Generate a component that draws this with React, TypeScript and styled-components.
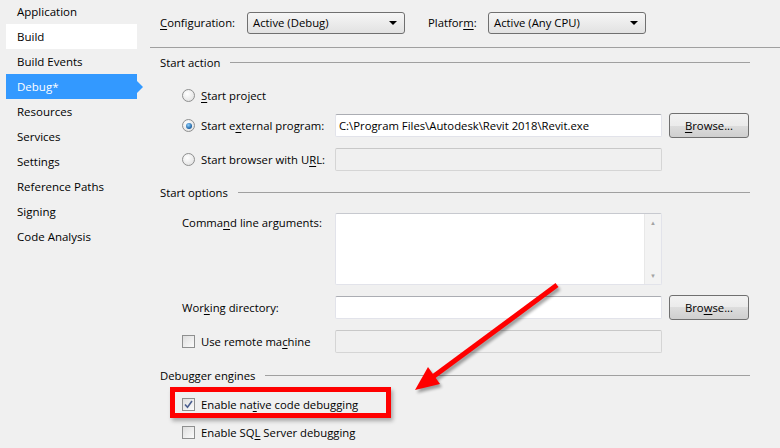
import styled, { createGlobalStyle } from 'styled-components';

const GlobalStyle = createGlobalStyle`
  html, body {
    margin: 0;
    padding: 0;
    background: #f0f0f0;
  }
  body {
    font-family: 'Open Sans', 'Noto Sans', sans-serif;
    font-size: 11px;
    color: #000;
  }
`;

const navItems = [
  'Application',
  'Build',
  'Build Events',
  'Debug*',
  'Resources',
  'Services',
  'Settings',
  'Reference Paths',
  'Signing',
  'Code Analysis',
];

// a label with the accelerator letter underlined
const Acc = ({ text, at }: { text: string; at: number }) => (
  <>
    {text.slice(0, at)}
    <U>{text[at]}</U>
    {text.slice(at + 1)}
  </>
);

const Radio = ({ checked }: { checked?: boolean }) => (
  <RadioOuter>{checked && <RadioDot />}</RadioOuter>
);

const Check = ({ checked }: { checked?: boolean }) => (
  <CheckBox>
    {checked && (
      <svg width="9" height="9" viewBox="0 0 9 9">
        <path d="M1 4.5 L3.5 7.2 L8 1" fill="none" stroke="#4b5f8f" strokeWidth="1.6" />
      </svg>
    )}
  </CheckBox>
);

const Arrow = () => (
  <ArrowLayer width="780" height="448" viewBox="0 0 780 448">
    <defs>
      <filter id="sh" x="-20%" y="-20%" width="140%" height="140%">
        <feGaussianBlur stdDeviation="1.5" />
      </filter>
    </defs>
    <g transform="translate(2 3)" opacity="0.35" filter="url(#sh)">
      <line x1="557" y1="285" x2="430" y2="379" stroke="#000" strokeWidth="5" />
      <polygon points="415,390 440,384 428,367" fill="#000" />
    </g>
    <line x1="557" y1="285" x2="430" y2="379" stroke="#ff0000" strokeWidth="5" />
    <polygon points="415,390 440,384 428,367" fill="#ff0000" />
  </ArrowLayer>
);

const App = () => {
  return (
    <Page>
      <GlobalStyle />
      <Sidebar>
        <NavList>
          {navItems.map((item) => (
            <NavItem key={item} $state={item === 'Debug*' ? 'active' : item === 'Build' ? 'hover' : 'none'}>
              {item}
            </NavItem>
          ))}
        </NavList>
      </Sidebar>

      <Main>
        <Header>
          <HeaderLabel $w={87}>
            <Acc text="Configuration:" at={0} />
          </HeaderLabel>
          <Dropdown>
            Active (Debug)
            <Caret />
          </Dropdown>
          <HeaderLabel $w={60} $gap={23}>
            <Acc text="Platform:" at={7} />
          </HeaderLabel>
          <Dropdown>
            Active (Any CPU)
            <Caret />
          </Dropdown>
        </Header>

        <GroupTitle $top={7}>Start action</GroupTitle>
        <Row $top={15}>
          <Radio />
          <ControlLabel>
            <Acc text="Start project" at={0} />
          </ControlLabel>
        </Row>
        <Row $top={7}>
          <Radio checked />
          <ControlLabel>
            <Acc text="Start external program:" at={7} />
          </ControlLabel>
          <TextBox>C:\Program Files\Autodesk\Revit 2018\Revit.exe</TextBox>
          <Button>
            <Acc text="Browse..." at={0} />
          </Button>
        </Row>
        <Row $top={11}>
          <Radio />
          <ControlLabel>
            <Acc text="Start browser with URL:" at={20} />
          </ControlLabel>
          <TextBox $disabled />
        </Row>

        <GroupTitle $top={14}>Start options</GroupTitle>
        <Row $top={14} $h={72} $align="flex-start">
          <PlainLabel $pad={2}>
            <Acc text="Command line arguments:" at={5} />
          </PlainLabel>
          <TextArea>
            <ScrollBar>
              <span>▲</span>
              <span>▼</span>
            </ScrollBar>
          </TextArea>
        </Row>
        <Row $top={10} $h={25}>
          <PlainLabel>
            <Acc text="Working directory:" at={3} />
          </PlainLabel>
          <TextBox />
          <Button>
            <Acc text="Browse..." at={3} />
          </Button>
        </Row>
        <Row $top={10}>
          <Check />
          <ControlLabel>
            <Acc text="Use remote machine" at={13} />
          </ControlLabel>
          <TextBox $disabled />
        </Row>

        <GroupTitle $top={15}>Debugger engines</GroupTitle>
        <Highlight>
          <Check checked />
          <CheckText>
            <Acc text="Enable native code debugging" at={9} />
          </CheckText>
        </Highlight>
        <Row $top={3}>
          <Check />
          <CheckText>
            <Acc text="Enable SQL Server debugging" at={9} />
          </CheckText>
        </Row>
      </Main>
      <Arrow />
    </Page>
  );
};

export default App;

const Page = styled.div`
  position: relative;
  width: 780px;
  height: 448px;
  overflow: hidden;
  display: flex;
  background: #f0f0f0;
`;

const Sidebar = styled.div`
  width: 150px;
  flex-shrink: 0;
`;

const NavList = styled.div`
  margin-top: -1px;
  padding-left: 6px;
  display: flex;
  flex-direction: column;
`;

const NavItem = styled.div<{ $state: 'active' | 'hover' | 'none' }>`
  position: relative;
  width: 131px;
  height: 25px;
  line-height: 25px;
  padding-left: 11px;
  box-sizing: border-box;
  font-size: 11.5px;
  color: ${({ $state }) => ($state === 'active' ? '#fff' : '#000')};
  background: ${({ $state }) => ($state === 'active' ? '#3399ff' : $state === 'hover' ? '#fff' : 'transparent')};

  ${({ $state }) =>
    $state === 'active' &&
    `
    &::after {
      content: '';
      position: absolute;
      left: 100%;
      top: 7px;
      border-left: 6px solid #3399ff;
      border-top: 6px solid transparent;
      border-bottom: 6px solid transparent;
    }
  `}
`;

const Main = styled.div`
  flex: 1;
  display: flex;
  flex-direction: column;
  font-size: 11.3px;
`;

const Header = styled.div`
  display: flex;
  align-items: center;
  height: 48px;
  padding: 12px 0 14px 10px;
  box-sizing: border-box;
  border-bottom: 1px solid #a0a0a0;
`;

const HeaderLabel = styled.div<{ $w: number; $gap?: number }>`
  width: ${({ $w }) => $w}px;
  margin-left: ${({ $gap }) => $gap ?? 0}px;
`;

const Dropdown = styled.div`
  position: relative;
  width: 158px;
  height: 22px;
  box-sizing: border-box;
  padding-left: 5px;
  line-height: 20px;
  border: 1px solid #707070;
  border-radius: 3px;
  background: linear-gradient(#f6f6f6, #e2e2e2);
`;

const Caret = styled.span`
  position: absolute;
  right: 7px;
  top: 8px;
  border-top: 4px solid #000;
  border-left: 4px solid transparent;
  border-right: 4px solid transparent;
`;

const GroupTitle = styled.div<{ $top: number }>`
  display: flex;
  align-items: center;
  gap: 10px;
  height: 14px;
  margin: ${({ $top }) => $top}px 30px 0 10px;

  &::after {
    content: '';
    flex: 1;
    height: 1px;
    background: #a0a0a0;
  }
`;

const Row = styled.div<{ $top: number; $h?: number; $align?: string }>`
  display: flex;
  align-items: ${({ $align }) => $align ?? 'center'};
  height: ${({ $h }) => $h ?? 23}px;
  margin-top: ${({ $top }) => $top}px;
  padding-left: 32px;
`;

const U = styled.span`
  text-decoration: underline;
  text-underline-offset: 2px;
`;

const RadioOuter = styled.div`
  width: 13px;
  height: 13px;
  box-sizing: border-box;
  border-radius: 50%;
  border: 1px solid #8e8f8f;
  background: radial-gradient(circle at 40% 35%, #ffffff, #dcdcdc);
  display: flex;
  align-items: center;
  justify-content: center;
  flex-shrink: 0;
`;

const RadioDot = styled.div`
  width: 6px;
  height: 6px;
  border-radius: 50%;
  background: radial-gradient(circle at 40% 35%, #8fd0ff, #1a5e9e 70%);
`;

const CheckBox = styled.div`
  width: 13px;
  height: 13px;
  box-sizing: border-box;
  border: 1px solid #8e8f8f;
  background: linear-gradient(135deg, #dedede, #fbfbfb);
  display: flex;
  align-items: center;
  justify-content: center;
  flex-shrink: 0;
`;

const ControlLabel = styled.div`
  width: 134px;
  margin-left: 6px;
  white-space: nowrap;
`;

const CheckText = styled.div`
  margin-left: 6px;
  white-space: nowrap;
`;

const PlainLabel = styled.div<{ $pad?: number }>`
  width: 153px;
  padding-top: ${({ $pad }) => $pad ?? 0}px;
  white-space: nowrap;
`;

const TextBox = styled.div<{ $disabled?: boolean }>`
  width: 327px;
  height: 23px;
  box-sizing: border-box;
  padding-left: 3px;
  line-height: 21px;
  border: 1px solid ${({ $disabled }) => ($disabled ? '#d5d5d5' : '#e2e3ea')};
  border-top-color: ${({ $disabled }) => ($disabled ? '#c8c8c8' : '#abadb3')};
  border-radius: 2px;
  background: ${({ $disabled }) => ($disabled ? '#f0f0f0' : '#fff')};
  white-space: nowrap;
  overflow: hidden;
`;

const TextArea = styled.div`
  width: 327px;
  height: 72px;
  box-sizing: border-box;
  border: 1px solid #e2e3ea;
  border-top-color: #c7c9cf;
  border-radius: 2px;
  background: #fff;
  display: flex;
  justify-content: flex-end;
`;

const ScrollBar = styled.div`
  width: 16px;
  background: #f3f3f3;
  border-left: 1px solid #e8e8e8;
  display: flex;
  flex-direction: column;
  justify-content: space-between;
  align-items: center;
  padding: 5px 0 4px;
  font-size: 6px;
  color: #a3a3a3;
`;

const Button = styled.div`
  width: 80px;
  height: 25px;
  margin-left: 7px;
  box-sizing: border-box;
  border: 1px solid #707070;
  border-radius: 3px;
  background: linear-gradient(#f2f2f2 0%, #ebebeb 50%, #dddddd 50%, #cfcfcf 100%);
  display: flex;
  align-items: center;
  justify-content: center;
  flex-shrink: 0;
`;

const Highlight = styled.div`
  display: flex;
  align-items: center;
  width: 221px;
  height: 31px;
  box-sizing: border-box;
  margin: 5px 0 0 20px;
  padding: 3px 0 0 7px;
  border: 5px solid #ff0000;
  box-shadow: 2px 3px 4px rgba(0, 0, 0, 0.3);
`;

const ArrowLayer = styled.svg`
  position: absolute;
  left: 0;
  top: 0;
  pointer-events: none;
`;
